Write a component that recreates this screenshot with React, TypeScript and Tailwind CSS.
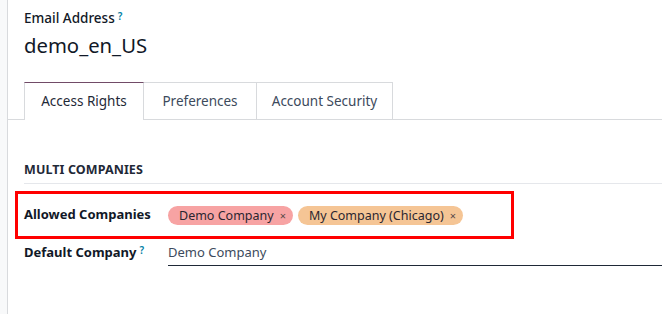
const font = { fontFamily: '"Noto Sans", "Open Sans", sans-serif' };

const Help = () => (
  <sup className="ml-[3px] text-[10px] font-semibold text-[#0180a5] relative -top-[3px]">?</sup>
);

const Tag = ({ label, color }: { label: string; color: string }) => (
  <span className={`inline-flex items-center h-[19px] rounded-full pl-[11px] pr-[7px] gap-[6px] text-[12.5px] leading-none text-[#2b2630] ${color}`}>
    {label}
    <span className="text-[11px] text-[#5a4a4a]">×</span>
  </span>
);

const tabs = [
  { label: 'Access Rights', w: 'w-[120px]' },
  { label: 'Preferences', w: 'w-[113px]' },
  { label: 'Account Security', w: 'w-[136px]' },
];

export default function App() {
  return (
    <div className="flex h-[314px] w-[662px] overflow-hidden bg-white" style={font}>
      <div className="w-[8px] shrink-0 border-r border-[#d8dadd] bg-[#f8f9fa]" />

      <div className="flex-1 min-w-0">
        <div className="px-4 pt-[8px]">
          <div className="text-[13.5px] leading-[20px] font-medium text-[#111827]">
            Email Address
            <Help />
          </div>
          <div className="mt-[3px] text-[20.3px] leading-[28px] text-[#111827]">demo_en_US</div>
        </div>

        <div className="mt-[23px] flex border-b border-[#d8dadd] pl-4">
          {tabs.map((t, i) => (
            <div
              key={t.label}
              className={
                i === 0
                  ? `relative -mb-px h-[38px] ${t.w} flex items-center justify-center border border-b-0 border-[#d8dadd] border-t-[#714b67] bg-white text-[13.5px] text-[#1f2937]`
                  : `h-[37px] ${t.w} flex items-center justify-center border-t border-r border-[#d8dadd] text-[13.5px] text-[#3c4a5c]`
              }
            >
              {t.label}
            </div>
          ))}
        </div>

        <div className="pl-4 pt-[41px]">
          <div className="pb-[3px] border-b border-[#e5e7eb] text-[12.5px] font-bold tracking-[0.1px] text-[#1f2937]">
            MULTI COMPANIES
          </div>
        </div>

        <div className="ml-[7px] mt-[7px] w-[499px] h-[48px] border-[3px] border-[#ff0000] flex items-center pl-[6px]">
          <div className="w-[144px] shrink-0 text-[13px] font-bold text-[#111827]">Allowed Companies</div>
          <div className="flex items-center gap-[5px] pt-[2px]">
            <Tag label="Demo Company" color="bg-[#f7a3a3]" />
            <Tag label="My Company (Chicago)" color="bg-[#f5c595]" />
          </div>
        </div>

        <div className="flex pl-4 pt-[3px]">
          <div className="w-[144px] shrink-0 text-[13px] leading-[20px] font-bold text-[#111827]">
            Default Company
            <Help />
          </div>
          <div className="flex-1 pb-[3px] border-b border-[#1f2937] text-[13px] leading-[20px] text-[#3c4a5c]">
            Demo Company
          </div>
        </div>
      </div>
    </div>
  );
}
